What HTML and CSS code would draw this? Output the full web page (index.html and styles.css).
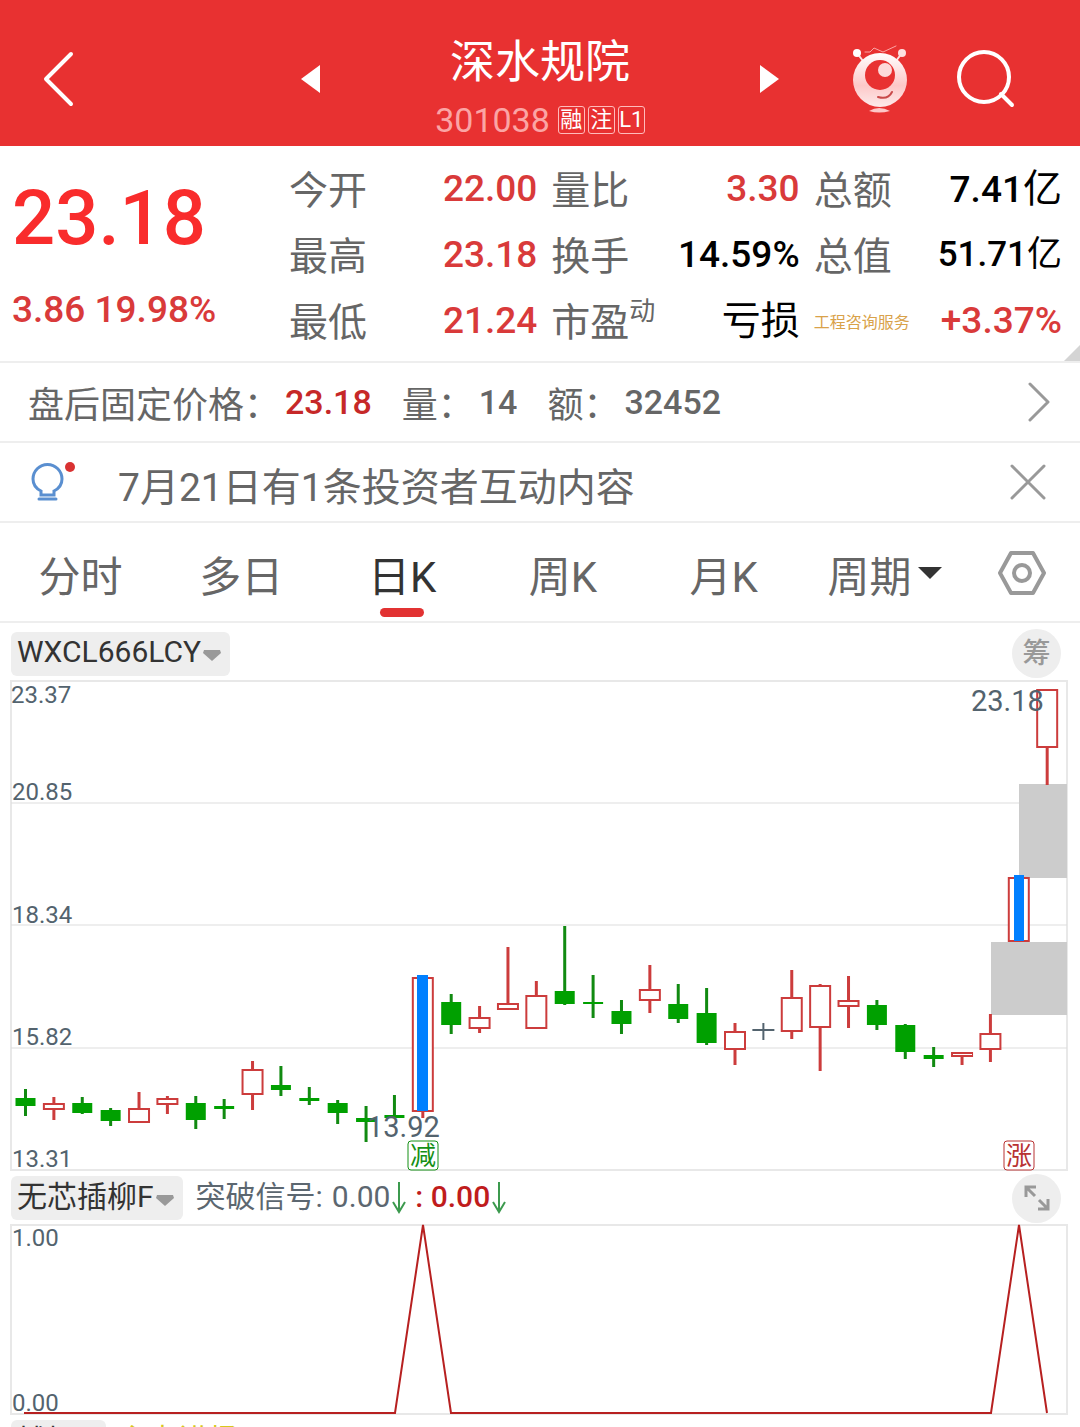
FILE: index.html
```html
<!DOCTYPE html>
<html lang="zh-CN">
<head>
<meta charset="utf-8">
<meta name="viewport" content="width=device-width">
<title>深水规院 301038</title>
<link rel="stylesheet" href="styles.css">
</head>

<body>

<header class="topbar">
  <button class="back" aria-label="返回">
    <svg width="32" height="56" viewBox="0 0 32 56"><path d="M29 3L4 28L29 53"/></svg>
  </button>
  <div class="switcher">
    <button aria-label="上一只"><svg width="19" height="28" viewBox="0 0 19 28"><path class="solid" d="M0 14L19 0V28Z"/></svg></button>
    <div class="stock">
      <h1>深水规院</h1>
      <div class="code"><span>301038</span><i>融</i><i>注</i><i>L1</i></div>
    </div>
    <button aria-label="下一只"><svg width="19" height="28" viewBox="0 0 19 28"><path class="solid" d="M19 14L0 0V28Z"/></svg></button>
  </div>
  <div class="tools">
    <button aria-label="助手">
      <svg class="robot" width="56" height="68" viewBox="852 44 56 68">
        <defs>
          <linearGradient id="skin" x1="0" y1="0" x2="0" y2="1">
            <stop offset="0" stop-color="#fff"/>
            <stop offset="0.6" stop-color="#fdc8c8"/>
            <stop offset="1" stop-color="#fdeaea"/>
          </linearGradient>
        </defs>
        <path class="thin" d="M865 51H870L874 47L883 51L896 45"/>
        <path class="stalk" d="M857 52L863 60M902 52L896 60"/>
        <circle cx="857" cy="52" r="4" fill="#fff"/>
        <circle cx="902" cy="52" r="4" fill="#fde0e0"/>
        <circle cx="880" cy="79" r="27" fill="url(#skin)"/>
        <circle cx="880" cy="74" r="15" fill="#e83131"/>
        <circle cx="885" cy="69" r="7" fill="#fdd9d9"/>
        <path class="smile" d="M878 96Q888 99 892 91"/>
        <path fill="#fdc8c8" d="M869 110Q879 104 890 110Q879 113 869 110Z"/>
      </svg>
    </button>
    <button aria-label="搜索">
      <svg width="58" height="58" viewBox="0 0 58 58"><circle cx="27" cy="27" r="25"/><path d="M44 44L55 55"/></svg>
    </button>
  </div>
</header>

<section class="quote">
  <div class="price">
    <strong>23.18</strong>
    <span>3.86 19.98%</span>
  </div>
  <dl>
    <div><dt>今开</dt><dd class="up">22.00</dd></div>
    <div><dt>最高</dt><dd class="up">23.18</dd></div>
    <div><dt>最低</dt><dd class="up">21.24</dd></div>
  </dl>
  <dl>
    <div><dt>量比</dt><dd class="up">3.30</dd></div>
    <div><dt>换手</dt><dd>14.59%</dd></div>
    <div><dt>市盈<sup>动</sup></dt><dd><span>亏损</span></dd></div>
  </dl>
  <dl>
    <div><dt>总额</dt><dd>7.41<span>亿</span></dd></div>
    <div><dt>总值</dt><dd class="small">51.71<span>亿</span></dd></div>
    <div><dt class="sector"><a href="#sector">工程咨询服务</a></dt><dd class="up">+3.37%</dd></div>
  </dl>
</section>

<a class="bar after" href="#after">
  <span>盘后固定价格：</span><b class="up">23.18</b>
  <span>量：</span><b>14</b>
  <span>额：</span><b>32452</b>
  <svg width="22" height="40" viewBox="0 0 22 40"><path d="M2 2L20 20L2 38"/></svg>
</a>

<div class="bar notice">
  <svg class="bulb" width="46" height="42" viewBox="0 0 46 42">
    <path d="M10 34V30C4 27 2 22 2 18A14 14 0 0 1 31 18C31 22 29 27 23 30V34ZM8 38H25"/>
    <circle cx="39" cy="6" r="5"/>
  </svg>
  <a href="#notice">7月21日有1条投资者互动内容</a>
  <button aria-label="关闭"><svg width="36" height="36" viewBox="0 0 36 36"><path d="M2 2L34 34M34 2L2 34"/></svg></button>
</div>

<nav class="tabs">
  <button>分时</button>
  <button>多日</button>
  <button class="active">日K</button>
  <button>周K</button>
  <button>月K</button>
  <button>周期<svg width="24" height="12" viewBox="0 0 24 12"><path d="M0 0H24L12 12Z"/></svg></button>
  <button aria-label="设置">
    <svg class="gear" width="48" height="46" viewBox="0 0 48 46"><path d="M13 3H35L46 23L35 43H13L2 23Z"/><circle cx="24" cy="23" r="8"/></svg>
  </button>
</nav>

<div class="panel-head main-head">
  <button class="pick">WXCL666LCY<svg width="18" height="11" viewBox="0 0 18 11"><path d="M1 0H17L18 3L9 11L0 3Z"/></svg></button>
  <button class="round">筹</button>
</div>

<svg class="chart" id="kline" viewBox="0 0 1080 492">
  <path class="frame" d="M11 1H1067V490H11Z"/>
  <path class="grid" d="M11 123H1067M11 245H1067M11 368H1067"/>
  <rect class="gap" x="1019" y="104" width="48" height="94"/>
  <rect class="gap" x="991" y="262" width="76" height="73"/>
  <g id="candles"></g>
  <rect class="signal" x="417" y="295" width="11" height="136"/>
  <rect class="signal" x="1014" y="195" width="10" height="66"/>
  <g class="axis">
    <text x="11" y="23">23.37</text>
    <text x="12" y="120">20.85</text>
    <text x="12" y="243">18.34</text>
    <text x="12" y="365">15.82</text>
    <text x="12" y="487">13.31</text>
  </g>
  <text class="extreme" x="971" y="31">23.18</text>
  <text class="extreme" x="367" y="457">13.92</text>
  <g class="mark sell"><rect x="408" y="461" width="30" height="29" rx="3"/><text x="423" y="485">减</text></g>
  <g class="mark rise"><rect x="1004" y="461" width="30" height="29" rx="3"/><text x="1019" y="485">涨</text></g>
</svg>

<div class="panel-head sub-head">
  <button class="pick">无芯插柳F<svg width="18" height="11" viewBox="0 0 18 11"><path d="M1 0H17L18 3L9 11L0 3Z"/></svg></button>
  <p class="readout">
    突破信号: <span>0.00</span><svg width="14" height="32" viewBox="0 0 14 32"><path d="M7 0V30M1 20L7 30L13 20"/></svg>
    <b>: 0.00</b><svg width="14" height="32" viewBox="0 0 14 32"><path d="M7 0V30M1 20L7 30L13 20"/></svg>
  </p>
  <button class="round" aria-label="展开">
    <svg width="26" height="26" viewBox="0 0 26 26"><path d="M2 12V2H12M2 2L11 11M24 14V24H14M24 24L15 15"/></svg>
  </button>
</div>

<svg class="chart" viewBox="0 0 1080 192">
  <path class="frame" d="M11 1H1067V190H11Z"/>
  <g class="axis">
    <text x="12" y="22">1.00</text>
    <text x="12" y="187">0.00</text>
  </g>
  <path class="line" d="M24 189H395L423 1L451 189H991L1019 1L1047 189"/>
</svg>

<div class="panel-head next-head">
  <button class="pick">捕捉<svg width="18" height="11" viewBox="0 0 18 11"><path d="M1 0H17L18 3L9 11L0 3Z"/></svg></button>
  <p class="readout gold">主力进场</p>
</div>

<script>
// high, body top, body bottom, low, kind
var candles = [
  [409, 418, 426, 436, "down"], [417, 423, 430, 440, "up"], [417, 423, 433, 434, "down"],
  [428, 430, 441, 446, "down"], [412, 428, 443, 443, "up"], [416, 418, 425, 434, "up"],
  [416, 423, 440, 449, "down"], [419, 426, 429, 439, "down"], [381, 389, 415, 430, "up"],
  [386, 405, 410, 416, "down"], [407, 418, 421, 425, "down"], [420, 423, 433, 444, "down"],
  [426, 438, 442, 462, "down"], [415, 435, 438, 438, "down"], [297, 297, 432, 438, "up"],
  [314, 322, 345, 354, "down"], [326, 337, 349, 353, "up"], [267, 323, 330, 330, "up"],
  [301, 315, 349, 349, "up"], [246, 311, 324, 325, "down"], [295, 322, 324, 338, "down"],
  [320, 331, 344, 354, "down"], [285, 309, 321, 333, "up"], [304, 324, 339, 343, "down"],
  [308, 333, 363, 365, "down"], [343, 351, 370, 385, "up"], [343, 349, 351, 360, "flat"],
  [290, 317, 352, 359, "up"], [304, 305, 348, 391, "up"], [296, 320, 327, 348, "up"],
  [320, 325, 345, 350, "down"], [344, 345, 372, 379, "down"], [367, 375, 379, 387, "down"],
  [372, 372, 377, 385, "up"], [334, 353, 370, 382, "up"], [197, 197, 262, 262, "up"],
  [9, 9, 68, 105, "up"]
];

var out = "";
for (var i = 0; i < candles.length; i++) {
  var c = candles[i];
  var x = 25.5 + i * 28.38;
  // hollow bodies are stroked, so pull them in by half the stroke
  var inset = c[4] == "up" ? 1 : 0;
  var half = c[4] == "down" ? 10 : 11;
  out += '<g class="' + c[4] + '">' +
    '<path d="M' + x + ' ' + c[0] + 'V' + c[1] + 'M' + x + ' ' + c[2] + 'V' + c[3] + '"/>' +
    '<rect x="' + (x - half + inset) + '" y="' + (c[1] + inset) +
    '" width="' + 2 * (half - inset) + '" height="' + (c[2] - c[1] - 2 * inset) + '"/></g>';
}
document.getElementById("candles").innerHTML = out;
</script>
</body>
</html>
```
FILE: styles.css
```css
* {
  box-sizing: border-box;
}

body {
  margin: 0;
  height: 100vh;
  overflow: hidden;
  background: #fff;
  color: #666;
  font-family: Roboto, "Noto Sans CJK SC", sans-serif;
  font-weight: 400;
}

button {
  margin: 0;
  padding: 0;
  border: 0;
  background: none;
  color: inherit;
  font: inherit;
}

a { color: inherit; text-decoration: none; }
svg { display: block; fill: none; flex: none; }
h1, p, dl, dd { margin: 0; }

/* header */
.topbar {
  display: grid;
  grid-template-columns: 1fr 478px 1fr;
  align-items: center;
  height: 146px;
  padding-top: 10px;
  background: #e83131;
  color: #fff;
}
.topbar svg { stroke: #fff; stroke-width: 4; stroke-linecap: round; stroke-linejoin: round; }
.topbar .solid { fill: #fff; stroke: none; }
.topbar .back { justify-self: start; padding-left: 42px; }
.switcher { display: flex; justify-content: space-between; align-items: center; }
.stock { padding-top: 23px; text-align: center; }
.stock h1 { font-size: 45px; line-height: 60px; font-weight: 400; }
.code { display: flex; justify-content: center; align-items: center; gap: 3px; height: 54px; }
.code span { margin-right: 5px; font-size: 34px; color: #fba5a5; }
.code i {
  width: 27px;
  height: 28px;
  border: 1px solid #fbb;
  border-radius: 3px;
  font-size: 22px;
  line-height: 26px;
  font-style: normal;
}
.tools { display: flex; justify-content: flex-end; align-items: center; gap: 49px; padding-right: 65px; }
.topbar .robot { stroke: none; }
.robot .thin { stroke: #fba5a5; stroke-width: 1; }
.robot .stalk { stroke: #fde0e0; stroke-width: 2; }
.robot .smile { stroke: #c94a4a; stroke-width: 2; }

/* quote */
.quote {
  position: relative;
  display: grid;
  grid-template-columns: 275px repeat(3, 1fr);
  column-gap: 14px;
  height: 217px;
  padding: 10px 18px 0 0;
  border-bottom: 2px solid #eee;
}
.quote:after {
  content: "";
  position: absolute;
  right: 0;
  bottom: 0;
  border: 8px solid #d4d4d4;
  border-top-color: transparent;
  border-left-color: transparent;
}
.price { padding-left: 12px; color: #f92c2c; }
.price strong { display: block; font-size: 76px; line-height: 124px; font-weight: 500; }
.price span { display: block; font-size: 37px; line-height: 60px; font-weight: 500; color: #d93a3a; }
.quote dl div { display: flex; justify-content: space-between; height: 66px; line-height: 66px; font-size: 39px; }
.quote dt { padding-top: 2px; white-space: nowrap; }
.quote dd { font-size: 37px; font-weight: 500; color: #000; }
.quote dd span { font-size: 39px; font-weight: 400; }
.quote dd.small, .quote .small span { font-size: 35px; }
.quote sup { font-size: 26px; line-height: 26px; vertical-align: 16px; }
.quote .sector { font-size: 16px; color: #d9a24a; }
.quote .up, .up { color: #d93a3a; }

/* rows under the quote */
.bar {
  display: flex;
  align-items: center;
  height: 80px;
  border-bottom: 2px solid #eee;
}
.after { padding: 0 30px 0 28px; font-size: 36px; }
.after b { margin: 0 30px 0 5px; font-size: 34px; font-weight: 500; }
.after .up { color: #c62828; }
.after svg { margin-left: auto; stroke: #999; stroke-width: 3; stroke-linecap: round; stroke-linejoin: round; }
.notice { padding: 0 34px 0 31px; font-size: 39px; }
.notice a { margin-left: 41px; padding-top: 4px; }
.notice button { margin-left: auto; }
.notice svg { stroke: #999; stroke-width: 3; stroke-linecap: round; }
.notice .bulb { stroke: #5a8fd0; }
.bulb circle { fill: #d93232; stroke: none; }

/* period tabs */
.tabs {
  display: grid;
  grid-template-columns: repeat(6, 1fr) 115px;
  height: 100px;
  border-bottom: 2px solid #eee;
  font-size: 42px;
}
.tabs button { position: relative; display: flex; justify-content: center; align-items: center; padding-top: 2px; }
.tabs button svg { margin-left: 6px; fill: #333; }
.tabs .gear { margin: 0; fill: none; stroke: #999; stroke-width: 4; stroke-linejoin: round; }
.tabs .active { color: #333; }
.tabs .active:after {
  content: "";
  position: absolute;
  bottom: 4px;
  width: 44px;
  height: 9px;
  border-radius: 5px;
  background: #e23232;
}

/* charts */
.panel-head {
  display: flex;
  align-items: center;
  padding: 0 19px 0 11px;
  font-size: 30px;
  line-height: 40px;
}
.main-head { height: 57px; padding-top: 4px; }
.sub-head { height: 52px; }
.next-head { height: 60px; align-items: flex-start; padding-top: 4px; }
.pick {
  display: flex;
  align-items: center;
  height: 44px;
  padding: 0 9px 3px 6px;
  border-radius: 6px;
  background: #eee;
  color: #333;
}
.pick svg { margin: 7px 0 0 2px; fill: #999; }
.round {
  display: flex;
  justify-content: center;
  align-items: center;
  width: 49px;
  height: 49px;
  margin-left: auto;
  border-radius: 50%;
  background: #eee;
  color: #999;
  font-size: 28px;
  font-weight: 500;
}
.round svg { stroke: #999; stroke-width: 3; }
.readout { display: flex; align-items: center; margin-left: 13px; padding-bottom: 3px; color: #5c6770; }
.readout span { margin-left: 9px; }
.readout svg { margin: 3px 0 0 2px; stroke: #3c9a4e; stroke-width: 2; }
.readout b { margin-left: 9px; font-weight: 500; color: #c01c1c; }
.readout.gold { color: #d8c81c; }

.chart { width: 100%; height: auto; overflow: visible; }
.frame { stroke: #e8e8e8; stroke-width: 2; }
.grid { stroke: #ddd; stroke-width: 1; }
.gap { fill: #ccc; }
.signal { fill: #0080ff; }
.chart .up { stroke: #cc3c3c; stroke-width: 2; }
.chart .up rect { fill: #fff; }
.chart .down { stroke: #118a11; stroke-width: 2; }
.chart .down path, .chart .up path { stroke-width: 3; }
.chart .down rect { fill: #00a000; stroke: none; }
.chart .flat { stroke: #53636e; stroke-width: 2; }
.chart .flat rect { fill: #53636e; stroke: none; }
.axis, .extreme { fill: #53636e; font-size: 24px; }
.extreme { font-size: 29px; }
.mark rect { fill: #fff; stroke-width: 1; }
.mark text { font-size: 26px; text-anchor: middle; }
.sell rect { stroke: #159015; }
.sell text { fill: #159015; }
.rise rect { stroke: #b83232; }
.rise text { fill: #b83232; }
.line { stroke: #b72020; stroke-width: 2; }
```
